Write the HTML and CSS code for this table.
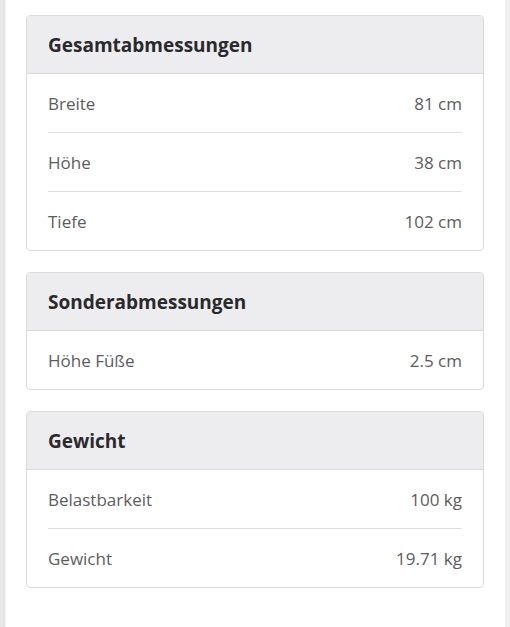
FILE: index.html
```html
<!DOCTYPE html>
<html lang="de">
<head>
<meta charset="utf-8">
<link rel="stylesheet" href="styles.css">
</head>
<body>
<div class="page">
  <div class="edge-left"></div>
  <main class="content">
    <section class="card">
      <h2 class="card-head">Gesamtabmessungen</h2>
      <div class="rows">
        <div class="row"><span class="label">Breite</span><span class="value">81 cm</span></div>
        <div class="row"><span class="label">Höhe</span><span class="value">38 cm</span></div>
        <div class="row"><span class="label">Tiefe</span><span class="value">102 cm</span></div>
      </div>
    </section>
    <section class="card">
      <h2 class="card-head">Sonderabmessungen</h2>
      <div class="rows">
        <div class="row"><span class="label">Höhe Füße</span><span class="value">2.5 cm</span></div>
      </div>
    </section>
    <section class="card">
      <h2 class="card-head">Gewicht</h2>
      <div class="rows">
        <div class="row"><span class="label">Belastbarkeit</span><span class="value">100 kg</span></div>
        <div class="row"><span class="label">Gewicht</span><span class="value">19.71 kg</span></div>
      </div>
    </section>
  </main>
  <div class="edge-right"></div>
</div>
</body>
</html>
```
FILE: styles.css
```css
html, body {
  margin: 0;
  padding: 0;
  background: #ffffff;
}
body {
  font-family: "Open Sans", "Noto Sans", sans-serif;
  width: 510px;
  height: 627px;
  overflow: hidden;
}
.page {
  display: flex;
  height: 627px;
}
.edge-left {
  width: 6px;
  flex: none;
  background: linear-gradient(to right, #e6e7e8 0, #e9eaeb 3px, #dcdddf 4px, #eeeff0 5px, #f7f7f8 6px);
}
.edge-right {
  width: 5px;
  flex: none;
  background: #f0f0f2;
}
.content {
  flex: 1;
  padding: 15px 21px 0 20px;
  display: flex;
  flex-direction: column;
  gap: 21px;
}
.card {
  border: 1px solid #dadadc;
  border-radius: 4px;
  overflow: hidden;
}
.card-head {
  margin: 0;
  height: 57px;
  display: flex;
  align-items: center;
  padding-left: 21px;
  background: #ededef;
  border-bottom: 1px solid #dadadc;
  font-size: 19px;
  font-weight: 700;
  color: #2a2a2c;
}
.rows {
  padding: 0 21px;
}
.row {
  height: 58px;
  display: flex;
  align-items: center;
  justify-content: space-between;
  border-bottom: 1px solid #e0e0e2;
  font-size: 17px;
  color: #5c5c5e;
}
.row:last-child {
  border-bottom: none;
}
```
